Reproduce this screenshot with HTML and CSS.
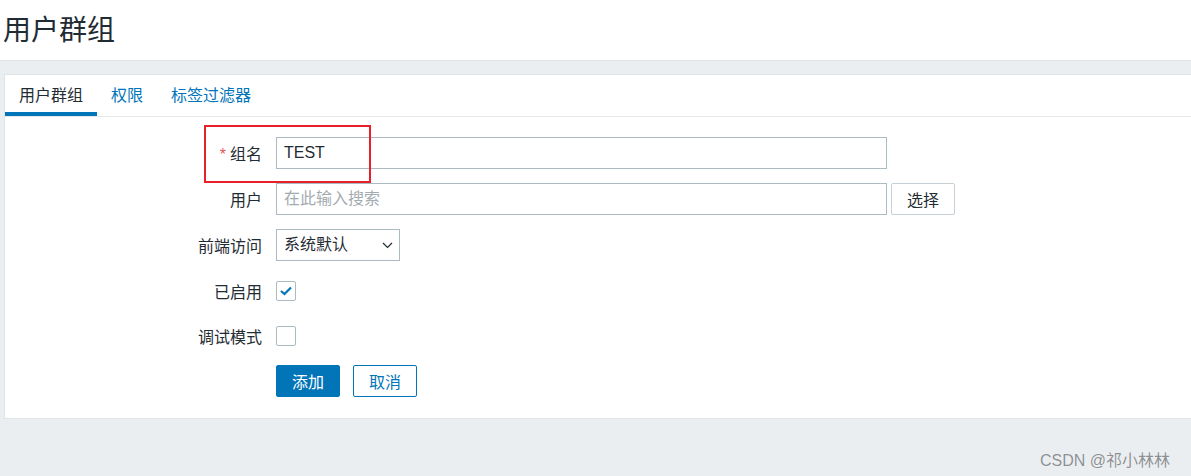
FILE: index.html
```html
<!DOCTYPE html>
<html lang="zh-CN">
<head>
<meta charset="utf-8">
<title>用户群组</title>
<link rel="stylesheet" href="styles.css">
</head>
<body>
<header class="page-header"><h1 class="page-title">用户群组</h1></header>
<main class="content">
  <section class="card">
    <nav class="tabs">
      <span class="tab tab-active">用户群组</span>
      <span class="tab">权限</span>
      <span class="tab">标签过滤器</span>
    </nav>
    <form class="form">
      <div class="row">
        <label class="label"><span class="req">*</span>组名</label>
        <div class="field"><input class="text-input" type="text" value="TEST"></div>
      </div>
      <div class="row">
        <label class="label">用户</label>
        <div class="field">
          <input class="text-input" type="text" placeholder="在此输入搜索">
          <button type="button" class="btn btn-alt">选择</button>
        </div>
      </div>
      <div class="row">
        <label class="label">前端访问</label>
        <div class="field">
          <div class="select">系统默认
            <svg class="chev" width="11" height="7" viewBox="0 0 11 7"><path d="M1 1 L5.5 5.5 L10 1" fill="none" stroke="#1f2c33" stroke-width="1.2"/></svg>
          </div>
        </div>
      </div>
      <div class="row row-check">
        <label class="label">已启用</label>
        <div class="field">
          <span class="checkbox"><svg width="18" height="18" viewBox="0 0 18 18"><path d="M4 9 L7.5 12 L14 5.5" fill="none" stroke="#0275b8" stroke-width="2.2"/></svg></span>
        </div>
      </div>
      <div class="row row-check">
        <label class="label">调试模式</label>
        <div class="field"><span class="checkbox"></span></div>
      </div>
      <div class="row row-buttons">
        <span class="label"></span>
        <div class="field">
          <button type="button" class="btn btn-primary">添加</button>
          <button type="button" class="btn btn-secondary">取消</button>
        </div>
      </div>
    </form>
  </section>
</main>
<div class="annotation"></div>
<div class="watermark">CSDN @祁小林林</div>
</body>
</html>
```

FILE: styles.css
```css
* { box-sizing: border-box; }
html, body { margin: 0; padding: 0; }
body {
  background: #ebeef0;
  font-family: "Liberation Sans", "Noto Sans CJK SC", sans-serif;
  color: #1f2c33;
  font-size: 16px;
  height: 476px;
  overflow: hidden;
  position: relative;
}
.page-header {
  height: 61px;
  background: #fff;
  border-bottom: 1px solid #dfe4e7;
  padding-left: 3px;
}
.page-title {
  margin: 0;
  font-weight: normal;
  font-size: 28px;
  line-height: 62px;
  color: #1f2c33;
}
.content {
  padding: 13px 0 0 4px;
}
.card {
  background: #fff;
  border: 1px solid #dfe4e7;
  border-right: none;
  padding-bottom: 21px;
}
.tabs {
  display: flex;
  height: 42px;
  border-bottom: 1px solid #e6eaec;
}
.tab {
  padding: 0 14px;
  line-height: 41px;
  height: 41px;
  color: #0275b8;
  font-size: 16px;
}
.tab-active {
  color: #1f2c33;
  box-shadow: inset 0 -4px 0 #0275b8;
}
.form {
  padding-top: 20px;
  display: flex;
  flex-direction: column;
  gap: 14px;
}
.row {
  display: flex;
  align-items: center;
  height: 32px;
  gap: 14px;
}
.row-check { height: 31px; }
.label {
  width: 257px;
  text-align: right;
  font-size: 16px;
  color: #1f2c33;
}
.req {
  color: #e45959;
  margin-right: 4px;
}
.field {
  display: flex;
  align-items: center;
  gap: 4px;
}
.text-input {
  width: 611px;
  height: 32px;
  border: 1px solid #acbbc2;
  border-radius: 0;
  padding: 0 7px;
  font-family: "Liberation Sans", "Noto Sans CJK SC", sans-serif;
  font-size: 16px;
  color: #1f2c33;
  outline: none;
}
.text-input::placeholder { color: #a3abb0; }
.select {
  position: relative;
  width: 124px;
  height: 32px;
  border: 1px solid #acbbc2;
  padding: 0 7px;
  line-height: 30px;
  font-size: 16px;
}
.chev {
  position: absolute;
  right: 6px;
  top: 12px;
}
.checkbox {
  width: 20px;
  height: 20px;
  border: 1px solid #acbbc2;
  border-radius: 2px;
  display: flex;
  align-items: center;
  justify-content: center;
  background: #fff;
}
.btn {
  height: 32px;
  width: 64px;
  border-radius: 2px;
  font-family: "Liberation Sans", "Noto Sans CJK SC", sans-serif;
  font-size: 16px;
  padding: 0;
  cursor: pointer;
}
.btn-alt {
  background: #fff;
  border: 1px solid #c6d0d5;
  color: #1f2c33;
}
.btn-primary {
  background: #0275b8;
  border: 1px solid #0275b8;
  color: #fff;
  margin-right: 9px;
}
.btn-secondary {
  background: #fff;
  border: 1px solid #0275b8;
  color: #0275b8;
}
.row-buttons { margin-top: 0; }
.annotation {
  position: absolute;
  left: 204px;
  top: 125px;
  width: 167px;
  height: 58px;
  border: 2px solid #e8202a;
}
.watermark {
  position: absolute;
  left: 1040px;
  top: 447px;
  font-size: 16px;
  color: #8c9094;
  text-shadow: 0 0 1px #fff;
  font-family: "Liberation Sans", "Noto Sans CJK SC", sans-serif;
}
```
